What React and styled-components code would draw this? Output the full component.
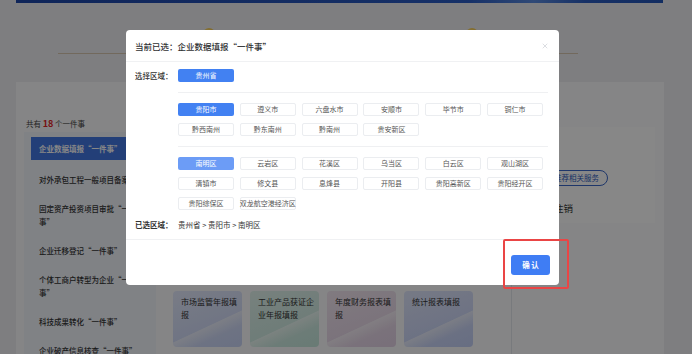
import React from 'react';
import styled, { createGlobalStyle } from 'styled-components';
import { X } from 'lucide-react';

const cities = ['贵阳市', '遵义市', '六盘水市', '安顺市', '毕节市', '铜仁市', '黔西南州', '黔东南州', '黔南州', '贵安新区'];
const districts = [
  '南明区', '云岩区', '花溪区', '乌当区', '白云区', '观山湖区',
  '清镇市', '修文县', '息烽县', '开阳县', '贵阳高新区', '贵阳经开区',
  '贵阳综保区', '双龙航空港经济区',
];
const matters = [
  '对外承包工程一般项目备案',
  '固定资产投资项目审批“一件事”',
  '企业迁移登记“一件事”',
  '个体工商户转型为企业“一件事”',
  '科技成果转化“一件事”',
  '企业破产信息核查“一件事”',
];
const cards = [
  { title: '市场监管年报填报', from: '#e4eafd', to: '#c9d4f6' },
  { title: '工业产品获证企业年报填报', from: '#e2f3ee', to: '#c6e8dd' },
  { title: '年度财务报表填报', from: '#f3e7f1', to: '#e3d2e6' },
  { title: '统计报表填报', from: '#e0e6fc', to: '#c3cff6' },
];

const GlobalStyle = createGlobalStyle`
  html, body {
    margin: 0;
    height: 354px;
    overflow: hidden;
  }
  body {
    background: #eeeff1;
    font-family: "Noto Sans CJK SC", "Noto Sans", sans-serif;
    color: #333;
  }
  * { box-sizing: border-box; }
`;

const Page = styled.div`
  position: relative;
  height: 354px;
  overflow: hidden;
`;

const Banner = styled.div`
  margin: 0 29px 0 16px;
  height: 3px;
  background: linear-gradient(90deg, #1d46a8 0%, #2a5cc4 70%, #5b8be0 80%, #2b5cc0 88%, #2355b8 100%);
`;

const Heading = styled.div`
  height: 79px;
  display: flex;
  justify-content: center;
  align-items: flex-start;
  gap: 22px;
  padding-top: 22px;
  margin-left: -12px;
  background-image: linear-gradient(90deg, transparent 70px, #d8c6b0 70px, #d8c6b0 590px, transparent 590px);
  background-size: 100% 1px;
  background-position: 0 50px;
  background-repeat: no-repeat;
`;

const GoldDot = styled.span`
  width: 12px;
  height: 12px;
  margin-top: 3px;
  border-radius: 50%;
  background: radial-gradient(circle at 40% 40%, #ffe37a, #f0b52e);
`;

const HeadTitle = styled.h1`
  margin: 5px 0 0;
  font-size: 17px;
  line-height: 20px;
  font-weight: 700;
  color: #d2242a;
  padding: 0 10px;
`;

const Panel = styled.div`
  margin: 0 28px 0 16px;
  height: 280px;
  background: #fbfcfe;
  display: flex;
  padding-top: 36px;
`;

const LeftCol = styled.div`
  width: 140px;
  padding-left: 8px;
  flex-shrink: 0;
`;

const Count = styled.div`
  font-size: 7.5px;
  line-height: 12px;
  color: #444;
  padding-left: 2px;
  b {
    color: #e02424;
    font-size: 9px;
    font-weight: 700;
  }
`;

const MatterList = styled.div`
  margin-top: 2px;
  background: #f1f5fc;
  padding: 5px 7px 0;
  height: 300px;
`;

const Matter = styled.div`
  padding: ${(p) => (p.$active ? '5px 8px' : '8px 8px')};
  margin-bottom: ${(p) => (p.$active ? '5px' : '0')};
  font-size: 7.5px;
  line-height: 13px;
  font-weight: ${(p) => (p.$active ? 700 : 500)};
  color: ${(p) => (p.$active ? '#fff' : '#333')};
  background: ${(p) => (p.$active ? '#4378e2' : 'transparent')};
  width: 116px;
`;

const MidCol = styled.div`
  flex: 1;
  padding: 0 6px 0 17px;
  display: flex;
  flex-direction: column;
`;

const Intro = styled.div`
  height: 138px;
  border-radius: 4px;
  background: #f4f7fd;
`;

const SectionTitle = styled.div`
  margin-top: 8px;
  font-size: 9px;
  line-height: 14px;
  font-weight: 700;
  color: #333;
`;

const CardRow = styled.div`
  margin-top: 13px;
  display: flex;
  gap: 8px;
`;

const Card = styled.div`
  width: 69px;
  height: 56px;
  border-radius: 4px;
  padding: 4px 3px 4px 8px;
  font-size: 8px;
  line-height: 13px;
  color: #333;
  background:
    linear-gradient(155deg, transparent 58%, rgba(255, 255, 255, 0.5) 59%, rgba(255, 255, 255, 0) 75%),
    linear-gradient(160deg, ${(p) => p.$from}, ${(p) => p.$to});
`;

const RightCol = styled.div`
  width: 153px;
  flex-shrink: 0;
  border-left: 1px solid #e3e6ec;
  padding: 9px 9px 0 9px;
`;

const RelBox = styled.div`
  height: 96px;
  background: #ffffff;
  padding: 43px 0 0 24px;
  display: flex;
  flex-direction: column;
  align-items: flex-start;
`;

const Pill = styled.span`
  display: block;
  height: 16px;
  padding: 0 8px;
  border: 1px solid #3a67c8;
  border-radius: 8px;
  font-size: 7.5px;
  line-height: 14px;
  color: #2d5bbf;
`;

const RelItem = styled.div`
  margin-top: 15px;
  margin-left: -10px;
  font-size: 9.5px;
  line-height: 14px;
  color: #333;
`;

const Overlay = styled.div`
  position: fixed;
  inset: 0;
  background: rgba(0, 0, 0, 0.47);
`;

const Dialog = styled.div`
  position: absolute;
  left: 126px;
  top: 30px;
  width: 433px;
  background: #fff;
  border-radius: 4px;
`;

const DialogHeader = styled.div`
  height: 32px;
  display: flex;
  align-items: center;
  justify-content: space-between;
  padding: 0 10px 0 9px;
  border-bottom: 1px solid #f0f1f3;
`;

const DialogTitle = styled.div`
  font-size: 8.5px;
  font-weight: 500;
  color: #303133;
`;

const Close = styled.span`
  display: flex;
  color: #b8bcc4;
`;

const DialogBody = styled.div`
  padding: 7px 11px 8px 9px;
`;

const Row = styled.div`
  display: flex;
  align-items: ${(p) => (p.$center ? 'center' : 'flex-start')};
  margin-top: ${(p) => p.$mt || 0}px;
`;

const Label = styled.div`
  width: 43px;
  flex-shrink: 0;
  font-size: 7.5px;
  line-height: 12px;
  font-weight: ${(p) => (p.$bold ? 700 : 500)};
  color: #333;
`;

const Group = styled.div`
  flex: 1;
  margin-top: 10px;
  padding-top: 10px;
  border-top: 1px solid #eff0f2;
  display: flex;
  flex-wrap: wrap;
  gap: 7px 5.8px;
`;

const AreaBtn = styled.button`
  width: 56px;
  height: 13px;
  padding: 0;
  border: 1px solid ${(p) => (p.$tone ? 'transparent' : '#ebedf0')};
  border-radius: 2px;
  background: ${(p) => (p.$tone === 'soft' ? '#6c9cf6' : p.$tone ? '#4281f2' : '#fff')};
  color: ${(p) => (p.$tone ? '#fff' : '#555')};
  font-family: inherit;
  font-size: 7px;
  line-height: 11px;
  white-space: nowrap;
  display: flex;
  justify-content: center;
  cursor: pointer;
`;

const PathText = styled.div`
  font-size: 7.5px;
  line-height: 12px;
  color: #333;
`;

const DialogFooter = styled.div`
  border-top: 1px solid #f0f1f3;
  padding: 9px 9px 10px;
  display: flex;
  justify-content: flex-end;
`;

const ConfirmWrap = styled.div`
  position: relative;
`;

const Confirm = styled.button`
  width: 39px;
  height: 20px;
  border: none;
  border-radius: 3px;
  background: #3f7df4;
  color: #fff;
  font-family: inherit;
  font-size: 7.5px;
  font-weight: 700;
  cursor: pointer;
`;

const Highlight = styled.span`
  position: absolute;
  left: -8px;
  top: -10px;
  right: -19px;
  bottom: -14px;
  border: 2px solid #ea4545;
  border-radius: 2px;
  pointer-events: none;
`;

export default function App() {
  return (
    <Page>
      <GlobalStyle />
      <Banner />
      <Heading>
        <GoldDot />
        <HeadTitle>企业数据填报“一件事”</HeadTitle>
        <GoldDot />
      </Heading>
      <Panel>
        <LeftCol>
          <Count>
            共有 <b>18</b> 个一件事
          </Count>
          <MatterList>
            <Matter $active>企业数据填报“一件事”</Matter>
            {matters.map((m) => (
              <Matter key={m}>{m}</Matter>
            ))}
          </MatterList>
        </LeftCol>
        <MidCol>
          <Intro />
          <SectionTitle>涉及事项</SectionTitle>
          <CardRow>
            {cards.map((c) => (
              <Card key={c.title} $from={c.from} $to={c.to}>
                {c.title}
              </Card>
            ))}
          </CardRow>
        </MidCol>
        <RightCol>
          <RelBox>
            <Pill>推荐相关服务</Pill>
            <RelItem>企业注销</RelItem>
          </RelBox>
        </RightCol>
      </Panel>

      <Overlay>
        <Dialog>
          <DialogHeader>
            <DialogTitle>当前已选：企业数据填报“一件事”</DialogTitle>
            <Close>
              <X size={8} strokeWidth={1.5} />
            </Close>
          </DialogHeader>
          <DialogBody>
            <Row $center>
              <Label>选择区域：</Label>
              <AreaBtn $tone="strong">贵州省</AreaBtn>
            </Row>
            <Row>
              <Label />
              <Group>
                {cities.map((c, i) => (
                  <AreaBtn key={c} $tone={i === 0 ? 'strong' : undefined}>
                    {c}
                  </AreaBtn>
                ))}
              </Group>
            </Row>
            <Row>
              <Label />
              <Group>
                {districts.map((d, i) => (
                  <AreaBtn key={d} $tone={i === 0 ? 'soft' : undefined}>
                    {d}
                  </AreaBtn>
                ))}
              </Group>
            </Row>
            <Row $mt={9} $center>
              <Label $bold>已选区域：</Label>
              <PathText>贵州省 &gt; 贵阳市 &gt; 南明区</PathText>
            </Row>
          </DialogBody>
          <DialogFooter>
            <ConfirmWrap>
              <Confirm>确 认</Confirm>
              <Highlight />
            </ConfirmWrap>
          </DialogFooter>
        </Dialog>
      </Overlay>
    </Page>
  );
}
